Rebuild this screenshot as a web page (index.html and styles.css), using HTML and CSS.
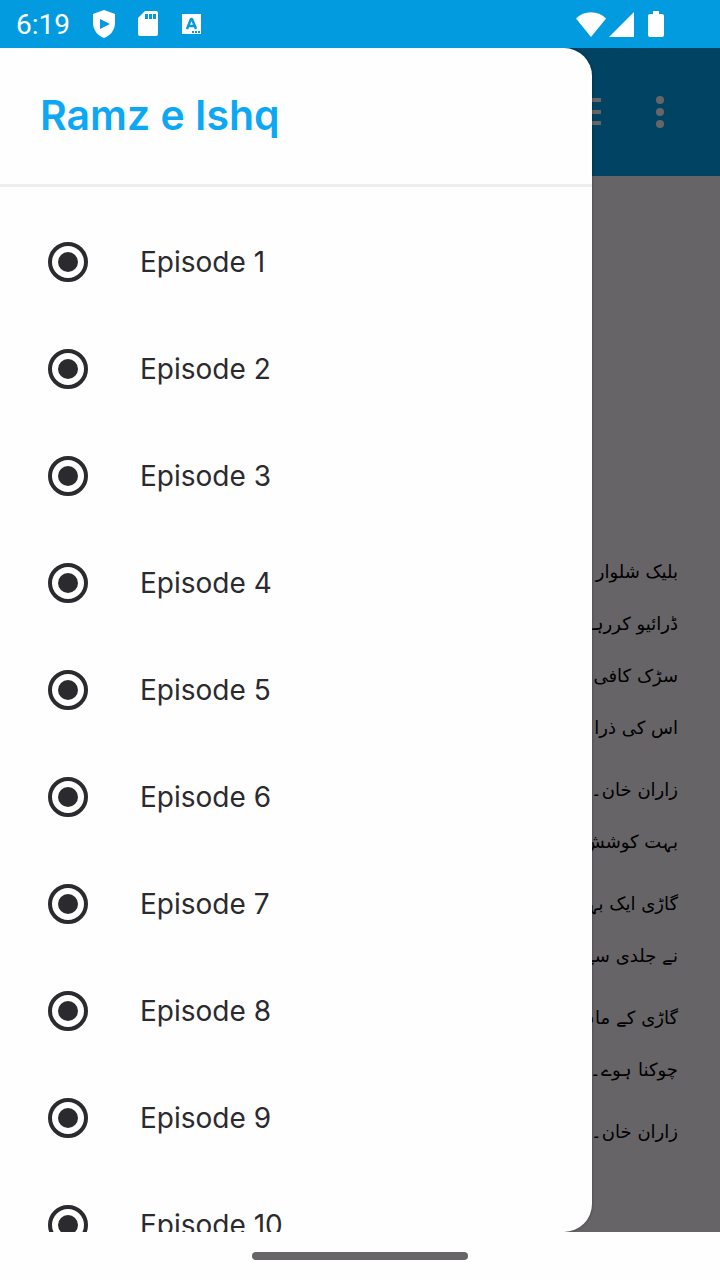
FILE: index.html
```html
<!DOCTYPE html>
<html lang="en">

<head>
  <meta charset="utf-8">
  <meta name="viewport" content="width=device-width">
  <title>Ramz e Ishq</title>
  <link rel="stylesheet" href="styles.css">
</head>

<body>
  <!-- shared icon for the episode list -->
  <svg class="symbols" width="0" height="0" aria-hidden="true">
    <symbol id="dot" viewBox="0 0 40 40">
      <circle cx="20" cy="20" r="18" fill="none" stroke="#2b2a2e" stroke-width="4"/>
      <circle cx="20" cy="20" r="10" fill="#2b2a2e"/>
    </symbol>
  </svg>

  <div class="status">
    <span class="time">6:19</span>
    <svg width="24" height="28" viewBox="0 0 24 28">
      <path fill="#fff" d="M12 0 23 4V13C23 20 18 26 12 28 6 26 1 20 1 13V4Z"/>
      <path fill="#039be0" d="M8 9 18 14 8 19Z"/>
    </svg>
    <svg width="20" height="26" viewBox="0 0 20 26">
      <path fill="#fff" d="M7 0H18Q20 0 20 2V23Q20 25 18 25H2Q0 25 0 23V7Z"/>
      <path fill="#039be0" d="M7 3H10V8H7ZM11 3H14V8H11ZM15 3H18V8H15Z"/>
    </svg>
    <svg class="lang" width="20" height="20" viewBox="0 0 20 20">
      <path fill="#fff" d="M0 0H19V20H0Z"/>
      <path fill="none" stroke="#039be0" stroke-width="2.5" stroke-linejoin="bevel" d="M5 15 9 5H10L14 15M7 12H12"/>
      <path fill="#039be0" d="M10 17H12V19H10ZM13 17H15V19H13ZM16 17H18V19H16Z"/>
    </svg>
    <div class="signals">
      <svg width="30" height="25" viewBox="0 0 30 25">
        <path fill="#fff" d="M0 6.5C8-2 22-2 30 6.5L15 25Z"/>
      </svg>
      <svg width="25" height="25" viewBox="0 0 25 25">
        <path fill="#fff" d="M25 0V25H0Z"/>
      </svg>
      <svg class="battery" width="16" height="26" viewBox="0 0 16 26">
        <path fill="#fff" d="M5 0H11V3H14Q16 3 16 5V24Q16 26 14 26H2Q0 26 0 24V5Q0 3 2 3H5Z"/>
      </svg>
    </div>
  </div>

  <div class="screen">
    <div class="appbar">
      <button class="icon-btn" aria-label="Episodes">
        <svg width="36" height="32" viewBox="0 0 36 32">
          <path stroke="#fff" stroke-width="4" d="M0 4H35M0 16H35M0 27H35"/>
        </svg>
      </button>
      <button class="icon-btn" aria-label="More options">
        <svg width="8" height="32" viewBox="0 0 8 32">
          <g fill="#fff"><circle cx="4" cy="4" r="4"/><circle cx="4" cy="16" r="4"/><circle cx="4" cy="28" r="4"/></g>
        </svg>
      </button>
    </div>

    <div class="reader" lang="ur" dir="rtl">
      <p>بلیک شلوار قمیض<br>ڈرائیو کررہا تھا<br>سڑک کافی خالی<br>اس کی ذرا برابر</p>
      <p>زاران خان۔۔<br>بہت کوشش کی</p>
      <p>گاڑی ایک بہت<br>نے جلدی سے</p>
      <p>گاڑی کے ماہر<br>چوکنا ہوے۔</p>
      <p>زاران خان۔۔</p>
    </div>

    <div class="scrim"></div>

    <nav class="drawer">
      <h1>Ramz e Ishq</h1>
      <ul>
        <li><a href="#ep1"><svg><use href="#dot"/></svg>Episode 1</a></li>
        <li><a href="#ep2"><svg><use href="#dot"/></svg>Episode 2</a></li>
        <li><a href="#ep3"><svg><use href="#dot"/></svg>Episode 3</a></li>
        <li><a href="#ep4"><svg><use href="#dot"/></svg>Episode 4</a></li>
        <li><a href="#ep5"><svg><use href="#dot"/></svg>Episode 5</a></li>
        <li><a href="#ep6"><svg><use href="#dot"/></svg>Episode 6</a></li>
        <li><a href="#ep7"><svg><use href="#dot"/></svg>Episode 7</a></li>
        <li><a href="#ep8"><svg><use href="#dot"/></svg>Episode 8</a></li>
        <li><a href="#ep9"><svg><use href="#dot"/></svg>Episode 9</a></li>
        <li><a href="#ep10"><svg><use href="#dot"/></svg>Episode 10</a></li>
      </ul>
    </nav>
  </div>

  <div class="gesture"><div class="pill"></div></div>
</body>

</html>
```

FILE: styles.css
```css
* {
  box-sizing: border-box;
}

body {
  background: #fefefe;
  display: flex;
  flex-direction: column;
  font-family: Inter, Roboto, sans-serif;
  height: 100vh;
  margin: 0;
}

svg {
  display: block;
  flex: none;
}

.symbols {
  position: absolute;
}

/* status bar */
.status {
  align-items: center;
  background: #039be0;
  color: #fff;
  display: flex;
  flex: none;
  gap: 22px;
  height: 48px;
  padding: 0 56px 0 16px;
}

.time {
  font-family: Roboto, sans-serif;
  font-size: 28px;
}

.lang {
  margin-left: 2px;
}

.signals {
  align-items: center;
  display: flex;
  gap: 3px;
  margin-left: auto;
}

.battery {
  margin-left: 11px;
}

/* page under the drawer */
.screen {
  background: #fffbff;
  flex: 1;
  min-height: 0;
  overflow: hidden;
  position: relative;
}

.appbar {
  align-items: center;
  background: #03a9f4;
  display: flex;
  gap: 54px;
  height: 128px;
  justify-content: flex-end;
  padding: 0 56px;
}

.icon-btn {
  background: none;
  border: 0;
  padding: 0;
}

.reader {
  color: #000;
  font-family: "DejaVu Sans", sans-serif;
  font-size: 18px;
  line-height: 52px;
  padding: 370px 42px 0;
}

.reader p {
  margin: 0 0 10px;
}

.scrim {
  background: rgba(0, 0, 0, 0.6);
  inset: 0;
  position: absolute;
}

/* drawer */
.drawer {
  background: #fefefe;
  border-radius: 0 28px 28px 0;
  box-shadow: 0 0 3px rgba(0, 0, 0, 0.4);
  inset: 0 128px 0 0;
  overflow: hidden;
  position: absolute;
}

.drawer h1 {
  border-bottom: 3px solid #eeedf0;
  color: #0ca8f4;
  font-size: 41px;
  font-weight: 600;
  line-height: 56px;
  margin: 0;
  padding: 39px 40px 41px;
}

.drawer ul {
  list-style: none;
  margin: 0;
  padding: 21px 0 0;
}

.drawer a {
  align-items: center;
  color: #2b2a2e;
  display: flex;
  font-size: 28px;
  gap: 52px;
  height: 107px;
  padding: 0 48px;
  text-decoration: none;
}

.drawer a svg {
  height: 40px;
  width: 40px;
}

/* gesture bar */
.gesture {
  align-items: center;
  display: flex;
  flex: none;
  height: 48px;
  justify-content: center;
}

.pill {
  background: #676567;
  border-radius: 4px;
  height: 8px;
  width: 30%;
}
```
